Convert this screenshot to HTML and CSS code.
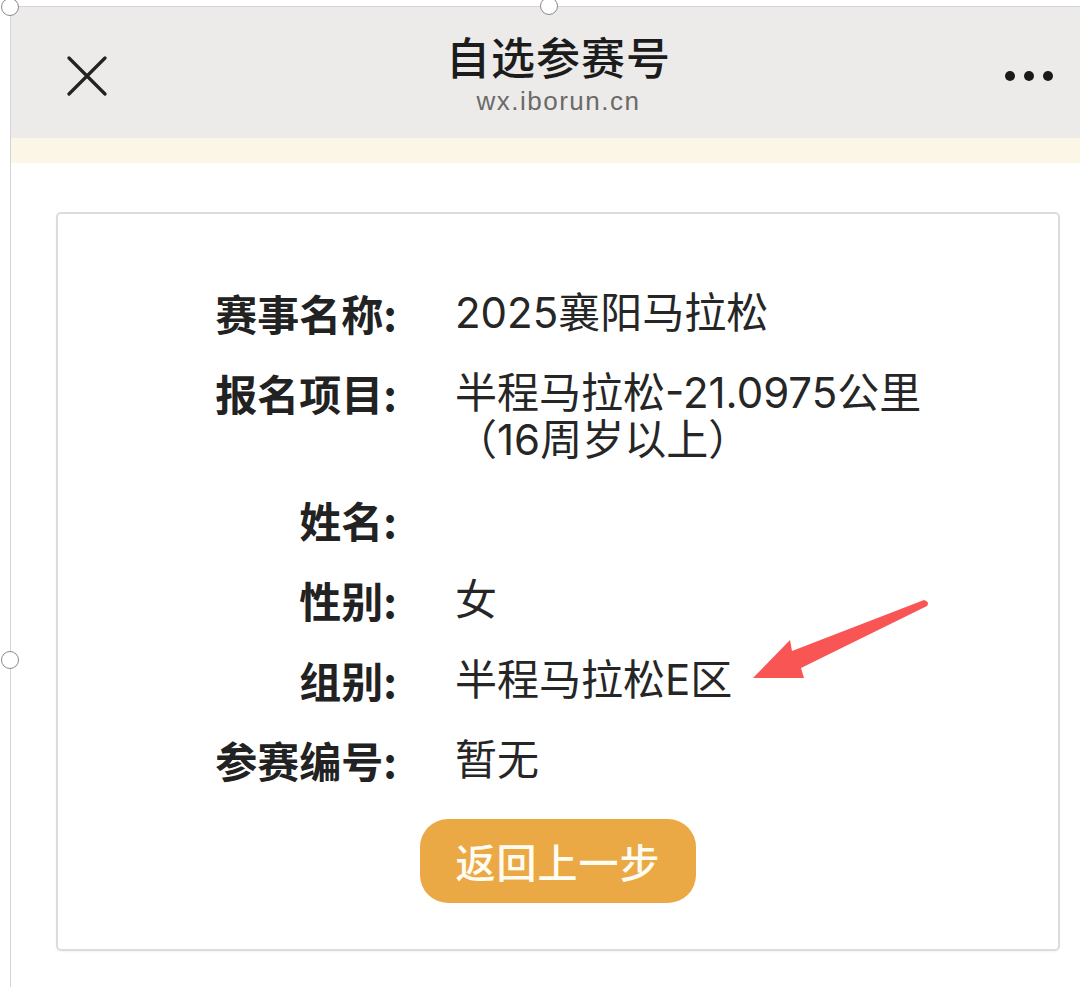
FILE: index.html
```html
<!DOCTYPE html>
<html lang="zh-CN">
<head>
<meta charset="utf-8">
<title>自选参赛号</title>
<link rel="stylesheet" href="styles.css">
</head>
<body>
<div class="frame">
  <header class="topbar">
    <div class="topbar-left">
      <svg class="close-icon" viewBox="0 0 40 40" width="40" height="40" aria-hidden="true">
        <path d="M2 2 L38 38 M38 2 L2 38" stroke="#222" stroke-width="3.2" stroke-linecap="round" fill="none"/>
      </svg>
    </div>
    <div class="topbar-title">
      <div class="title">自选参赛号</div>
      <div class="domain">wx.iborun.cn</div>
    </div>
    <div class="topbar-right">
      <span class="dot"></span><span class="dot"></span><span class="dot"></span>
    </div>
  </header>
  <div class="notice-band"></div>
  <main class="content">
    <section class="card">
      <div class="info">
        <div class="label">赛事名称:</div><div class="value">2025襄阳马拉松</div>
        <div class="label">报名项目:</div>
        <div class="value">
          <div class="value-line">半程马拉松-21.0975公里</div>
          <div class="value-line">（16周岁以上）</div>
        </div>
        <div class="label">姓名:</div><div class="value"></div>
        <div class="label">性别:</div><div class="value">女</div>
        <div class="label">组别:</div><div class="value">半程马拉松E区</div>
        <div class="label">参赛编号:</div><div class="value">暂无</div>
      </div>
      <button class="back-btn" type="button">返回上一步</button>
    </section>
  </main>
</div>

<span class="handle handle-tl"></span>
<span class="handle handle-tm"></span>
<span class="handle handle-ml"></span>

<svg class="annotation-arrow" viewBox="740 590 200 100" width="200" height="100" aria-hidden="true">
  <path d="M924 600 Q930 602 927 606 L801 668 L804 678 L753 678 L790 640 L792 651 Z" fill="#FA5555"/>
</svg>
</body>
</html>
```

FILE: styles.css
```css
* { box-sizing: border-box; }

html, body {
  margin: 0;
  padding: 0;
  background: #ffffff;
}

body {
  width: 1080px;
  height: 987px;
  overflow: hidden;
  position: relative;
  font-family: "Noto Sans CJK SC", "Noto Sans", sans-serif;
  color: #222;
}

.frame {
  margin: 6px 0 0 10px;
  border-top: 1px solid #d4d4d8;
  border-left: 1px solid #d4d4d8;
  height: 981px;
}

.topbar {
  height: 131px;
  background: #ECEBE9;
  display: grid;
  grid-template-columns: 1fr auto 1fr;
  align-items: center;
}

.topbar-left {
  padding-left: 56px;
  display: flex;
  align-items: center;
  padding-top: 6px;
}

.close-icon { display: block; }

.topbar-title {
  display: flex;
  flex-direction: column;
  align-items: center;
  padding-top: 1px;
  margin-left: 26px;
}

.title {
  font-size: 44px;
  line-height: 52px;
  font-weight: 500;
  color: #1c1c1c;
  letter-spacing: 1px;
}

.domain {
  font-family: "Liberation Sans", "Noto Sans", sans-serif;
  font-size: 26px;
  line-height: 30px;
  color: #6a6a6a;
  margin-top: 4px;
  letter-spacing: 1.5px;
}

.topbar-right {
  display: flex;
  justify-content: flex-end;
  align-items: center;
  gap: 9px;
  padding-right: 27px;
  padding-top: 6px;
}

.dot {
  width: 10px;
  height: 10px;
  border-radius: 50%;
  background: #1a1a1a;
}

.notice-band {
  height: 25px;
  background: #FCF6E6;
}

.content {
  padding: 49px 20px 0 45px;
}

.card {
  border: 2px solid #DCDCDC;
  border-radius: 5px;
  box-shadow: 0 1px 2px rgba(0,0,0,0.05);
  padding: 75px 0 46px;
  display: flex;
  flex-direction: column;
  align-items: center;
}

.info {
  align-self: stretch;
  display: grid;
  grid-template-columns: 339px 1fr;
  column-gap: 58px;
  row-gap: 33px;
  font-size: 42px;
  line-height: 47px;
}

.label {
  text-align: right;
  font-weight: 700;
  color: #222;
}

.value {
  font-family: "Inter", "Noto Sans CJK SC", sans-serif;
  font-weight: 400;
  color: #262626;
  min-height: 47px;
}

.value-line {
  height: 47px;
}

.back-btn {
  margin-top: 36px;
  width: 276px;
  height: 84px;
  border: none;
  border-radius: 28px;
  background: #EBA946;
  color: #FFFCF2;
  font-family: "Noto Sans CJK SC", sans-serif;
  font-size: 40px;
  font-weight: 500;
  letter-spacing: 1px;
  padding: 0;
}

.handle {
  position: absolute;
  width: 18px;
  height: 18px;
  border-radius: 50%;
  border: 1.5px solid #8a8a8a;
  background: #ffffff;
}

.handle-tl { left: 1px; top: -2px; }
.handle-tm { left: 540px; top: -3px; }
.handle-ml { left: 1px; top: 651px; }

.annotation-arrow {
  position: absolute;
  left: 740px;
  top: 590px;
}
```
